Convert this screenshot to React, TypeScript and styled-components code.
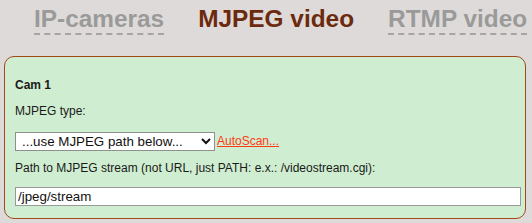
import React from 'react';
import styled, { createGlobalStyle } from 'styled-components';

const GlobalStyle = createGlobalStyle`
  html, body {
    margin: 0;
    padding: 0;
    background: #dedad9;
    font-family: 'Liberation Sans', Arial, sans-serif;
    color: #1a1a1a;
  }
`;

const Tabs = styled.div`
  display: flex;
  gap: 34px;
  padding: 5px 0 0 34px;
  white-space: nowrap;
  overflow: hidden;
  height: 56px;
  box-sizing: border-box;
`;

const Tab = styled.span<{ active?: boolean }>`
  display: inline-block;
  font-size: 24.4px;
  font-weight: bold;
  line-height: 28px;
  height: 28px;
  color: ${(p) => (p.active ? '#6b2a0e' : '#9a9a9a')};
  border-bottom: ${(p) => (p.active ? '2px solid transparent' : '2px dashed #a5a5a5')};
  cursor: pointer;
`;

const Panel = styled.div`
  margin: 0 6px 0 4px;
  background: #cfedd0;
  border: 1px solid #a4481a;
  border-radius: 10px;
  padding: 21px 4px 12px 10px;
  font-size: 12px;
`;

const Row = styled.div<{ gap?: number }>`
  display: flex;
  align-items: center;
  line-height: 15px;
  margin-bottom: ${(p) => p.gap ?? 11}px;
`;

const Title = styled.div`
  font-weight: bold;
  line-height: 15px;
  margin-bottom: 11px;
`;

const Select = styled.select`
  width: 200px;
  height: 19px;
  font-family: 'Liberation Sans', Arial, sans-serif;
  font-size: 13.33px;
  color: #111;
  background: #fff;
  border: 1px solid #8f8f8f;
  border-radius: 0;
  padding: 0 0 0 2px;
  margin: 0;
`;

const AutoScan = styled.a`
  margin-left: 2px;
  color: #ff3a12;
  text-decoration: underline;
  font-size: 12px;
  cursor: pointer;
`;

const PathInput = styled.input`
  display: block;
  width: 100%;
  height: 19px;
  box-sizing: border-box;
  font-family: 'Liberation Sans', Arial, sans-serif;
  font-size: 13.33px;
  color: #111;
  background: #fff;
  border: 1px solid #999;
  padding: 0 2px;
  margin: 0;
`;

export default function App() {
  return (
    <>
      <GlobalStyle />
      <Tabs>
        <Tab>IP-cameras</Tab>
        <Tab active>MJPEG video</Tab>
        <Tab>RTMP video</Tab>
      </Tabs>
      <Panel>
        <Title>Cam 1</Title>
        <Row gap={13}>MJPEG type:</Row>
        <Row gap={10}>
          <Select defaultValue="path">
            <option value="path">...use MJPEG path below...</option>
          </Select>
          <AutoScan>AutoScan...</AutoScan>
        </Row>
        <Row>
          Path to MJPEG stream (not URL, just PATH: e.x.: /videostream.cgi):
        </Row>
        <PathInput defaultValue="/jpeg/stream" />
      </Panel>
    </>
  );
}
